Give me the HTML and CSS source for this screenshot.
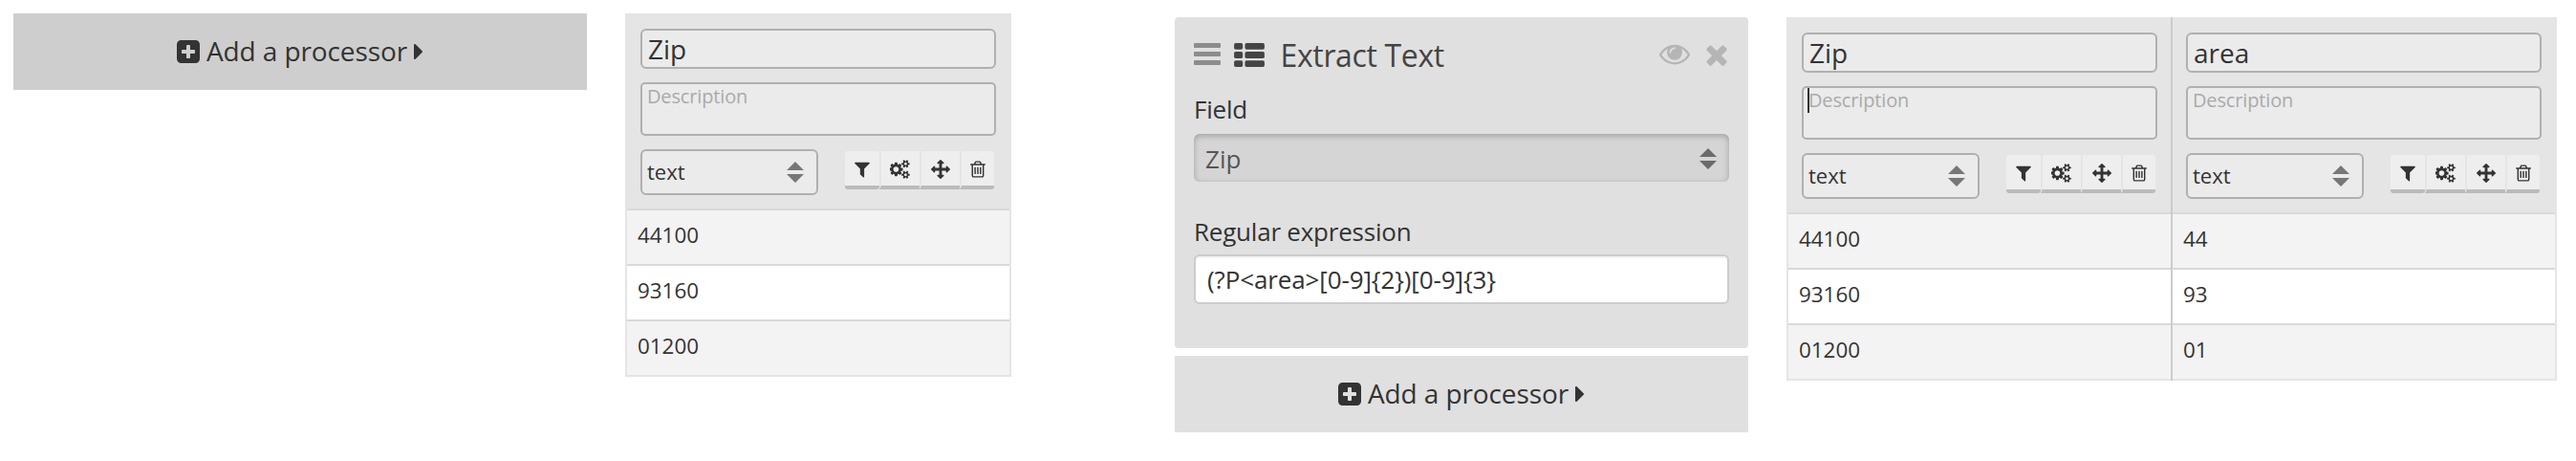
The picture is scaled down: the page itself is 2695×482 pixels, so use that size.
FILE: index.html
```html
<!DOCTYPE html>
<html lang="en">
<head>
<meta charset="utf-8">
<title>Processors</title>
<link rel="stylesheet" href="styles.css">
</head>
<body>
<svg class="defs" aria-hidden="true">
  <symbol id="plus-square" viewBox="128 128 1536 1536"><path d="M1344 960v-128q0-26-19-45t-45-19h-256v-256q0-26-19-45t-45-19h-128q-26 0-45 19t-19 45v256h-256q-26 0-45 19t-19 45v128q0 26 19 45t45 19h256v256q0 26 19 45t45 19h128q26 0 45-19t19-45v-256h256q26 0 45-19t19-45zM1664 416v960q0 119-84.500 203.500t-203.500 84.500h-960q-119 0-203.500-84.500t-84.500-203.500v-960q0-119 84.500-203.500t203.500-84.500h960q119 0 203.500 84.500t84.500 203.500z"/></symbol>
  <symbol id="caret" viewBox="576 384 576 1024"><path d="M1152 896q0 26-19 45l-448 448q-19 19-45 19t-45-19-19-45v-896q0-26 19-45t45-19 45 19l448 448q19 19 19 45z"/></symbol>
  <symbol id="filter" viewBox="0 0 1792 1792"><path d="M1595 295q17 41-14 70l-493 493v742q0 42-39 59-13 5-25 5-27 0-45-19l-256-256q-19-19-19-45v-486l-493-493q-31-29-14-70 17-39 59-39h1280q42 0 59 39z"/></symbol>
  <symbol id="cogs" viewBox="0 0 1920 1792"><path d="M832 896q0-106-75-181t-181-75-181 75-75 181 75 181 181 75 181-75 75-181zm768 512q0-52-38-90t-90-38-90 38-38 90q0 53 37.500 90.500t90.500 37.500 90.500-37.500 37.500-90.500zm0-1024q0-52-38-90t-90-38-90 38-38 90q0 53 37.500 90.500t90.500 37.500 90.500-37.500 37.500-90.500zm-384 421v185q0 10-7 19.500t-16 10.500l-155 24q-11 35-32 76 34 48 90 115 7 11 7 20 0 12-7 19-23 30-82.500 89.500t-78.500 59.500q-11 0-21-7l-115-90q-37 19-77 31-11 108-23 155-7 24-30 24h-186q-11 0-20-7.500t-10-17.500l-23-153q-34-10-75-31l-118 89q-7 7-20 7-11 0-21-8-144-133-144-160 0-9 7-19 10-14 41-53t47-61q-23-44-35-82l-152-24q-10-1-17-9.500t-7-19.500v-185q0-10 7-19.500t16-10.500l155-24q11-35 32-76-34-48-90-115-7-11-7-20 0-12 7-20 22-30 82-89t79-59q11 0 21 7l115 90q34-18 77-32 11-108 23-154 7-24 30-24h186q11 0 20 7.500t10 17.500l23 153q34 10 75 31l118-89q8-7 20-7 11 0 21 8 144 133 144 160 0 8-7 19-12 16-42 54t-45 60q23 48 34 82l152 23q10 2 17 10.500t7 19.500zm640 533v140q0 16-149 31-12 27-30 52 51 113 51 138 0 4-4 7-122 71-124 71-8 0-46-47t-52-68q-20 2-30 2t-30-2q-14 21-52 68t-46 47q-2 0-124-71-4-3-4-7 0-25 51-138-18-25-30-52-149-15-149-31v-140q0-16 149-31 13-29 30-52-51-113-51-138 0-4 4-7 4-2 35-20t59-34 30-16q8 0 46 46.500t52 67.500q20-2 30-2t30 2q51-71 92-112l6-2q4 0 124 70 4 3 4 7 0 25-51 138 17 23 30 52 149 15 149 31zm0-1024v140q0 16-149 31-12 27-30 52 51 113 51 138 0 4-4 7-122 71-124 71-8 0-46-47t-52-68q-20 2-30 2t-30-2q-14 21-52 68t-46 47q-2 0-124-71-4-3-4-7 0-25 51-138-18-25-30-52-149-15-149-31v-140q0-16 149-31 13-29 30-52-51-113-51-138 0-4 4-7 4-2 35-20t59-34 30-16q8 0 46 46.500t52 67.500q20-2 30-2t30 2q51-71 92-112l6-2q4 0 124 70 4 3 4 7 0 25-51 138 17 23 30 52 149 15 149 31z"/></symbol>
  <symbol id="move" viewBox="0 0 1792 1792"><path d="M1792 896q0 26-19 45l-256 256q-19 19-45 19t-45-19-19-45v-128h-384v384h128q26 0 45 19t19 45-19 45l-256 256q-19 19-45 19t-45-19l-256-256q-19-19-19-45t19-45 45-19h128v-384h-384v128q0 26-19 45t-45 19-45-19l-256-256q-19-19-19-45t19-45l256-256q19-19 45-19t45 19 19 45v128h384v-384h-128q-26 0-45-19t-19-45 19-45l256-256q19-19 45-19t45 19l256 256q19 19 19 45t-19 45-45 19h-128v384h384v-128q0-26 19-45t45-19 45 19l256 256q19 19 19 45z"/></symbol>
  <symbol id="trash" viewBox="0 0 1792 1792"><path d="M704 736v576q0 14-9 23t-23 9h-64q-14 0-23-9t-9-23v-576q0-14 9-23t23-9h64q14 0 23 9t9 23zm256 0v576q0 14-9 23t-23 9h-64q-14 0-23-9t-9-23v-576q0-14 9-23t23-9h64q14 0 23 9t9 23zm256 0v576q0 14-9 23t-23 9h-64q-14 0-23-9t-9-23v-576q0-14 9-23t23-9h64q14 0 23 9t9 23zm128 724v-948h-896v948q0 22 7 40.500t14.500 27 10.500 8.500h832q3 0 10.500-8.500t14.500-27 7-40.500zm-672-1076h448l-48-117q-7-9-17-11h-317q-10 2-17 11zm928 32v64q0 14-9 23t-23 9h-96v948q0 83-47 143.500t-113 60.500h-832q-66 0-113-58.500t-47-141.500v-952h-96q-14 0-23-9t-9-23v-64q0-14 9-23t23-9h309l70-167q15-37 54-63t79-26h320q40 0 79 26t54 63l70 167h309q14 0 23 9t9 23z"/></symbol>
  <symbol id="eye" viewBox="0 0 1792 1792"><path d="M1664 960q-152-236-381-353 61 104 61 225 0 185-131.500 316.500t-316.500 131.500-316.500-131.500-131.500-316.500q0-121 61-225-229 117-381 353 133 205 333.500 326.500t434.500 121.500 434.500-121.500 333.500-326.500zm-720-384q0-20-14-34t-34-14q-125 0-214.500 89.500t-89.500 214.500q0 20 14 34t34 14 34-14 14-34q0-86 61-147t147-61q20 0 34-14t14-34zm848 384q0 34-20 69-140 230-376.500 368.500t-499.500 138.500-499.500-139-376.500-368q-20-35-20-69t20-69q140-229 376.500-368t499.500-139 499.500 139 376.500 368q20 35 20 69z"/></symbol>
  <symbol id="times" viewBox="0 0 1792 1792"><path d="M1490 1322q0 40-28 68l-136 136q-28 28-68 28t-68-28l-294-294-294 294q-28 28-68 28t-68-28l-136-136q-28-28-28-68t28-68l294-294-294-294q-28-28-28-68t28-68l136-136q28-28 68-28t68 28l294 294 294-294q28-28 68-28t68 28l136 136q28 28 28 68t-28 68l-294 294 294 294q28 28 28 68z"/></symbol>
  <symbol id="sort" viewBox="0 0 18 22"><path d="M0 9L9 0L18 9zM0 13H18L9 22z"/></symbol>
</svg>

<main class="page">
  <section class="steps steps-empty">
    <div class="add add-hover">
      <svg class="add-plus"><use href="#plus-square"/></svg>
      <span class="add-label">Add a processor</span>
      <svg class="add-caret"><use href="#caret"/></svg>
    </div>
  </section>

  <section class="grid grid-before">
    <div class="column">
      <div class="head">
        <div class="name">Zip</div>
        <div class="desc">Description</div>
        <div class="controls">
          <div class="type"><span>text</span><svg class="sort"><use href="#sort"/></svg></div>
          <div class="tools">
            <span class="tool"><svg><use href="#filter"/></svg></span>
            <span class="tool tool-mid"><svg class="cogs"><use href="#cogs"/></svg></span>
            <span class="tool tool-mid"><svg><use href="#move"/></svg></span>
            <span class="tool tool-last"><svg><use href="#trash"/></svg></span>
          </div>
        </div>
      </div>
      <div class="cell odd">44100</div>
      <div class="cell">93160</div>
      <div class="cell odd">01200</div>
    </div>
  </section>

  <section class="steps steps-filled">
    <div class="panel">
      <div class="panel-head">
        <svg class="bars" viewBox="0 0 28 23"><rect width="28" height="5" rx="1"/><rect y="9" width="28" height="5" rx="1"/><rect y="18" width="28" height="5" rx="1"/></svg>
        <svg class="list" viewBox="0 0 1792 1408"><rect width="512" height="384" rx="96"/><rect x="640" width="1152" height="384" rx="96"/><rect y="512" width="512" height="384" rx="96"/><rect x="640" y="512" width="1152" height="384" rx="96"/><rect y="1024" width="512" height="384" rx="96"/><rect x="640" y="1024" width="1152" height="384" rx="96"/></svg>
        <span class="panel-title">Extract Text</span>
        <svg class="action"><use href="#eye"/></svg>
        <svg class="action close"><use href="#times"/></svg>
      </div>
      <div class="label">Field</div>
      <div class="select"><span>Zip</span><svg class="sort"><use href="#sort"/></svg></div>
      <div class="label label-regex">Regular expression</div>
      <div class="input">(?P&lt;area&gt;[0-9]{2})[0-9]{3}</div>
    </div>
    <div class="add">
      <svg class="add-plus"><use href="#plus-square"/></svg>
      <span class="add-label">Add a processor</span>
      <svg class="add-caret"><use href="#caret"/></svg>
    </div>
  </section>

  <section class="grid grid-after">
    <div class="column">
      <div class="head">
        <div class="name">Zip</div>
        <div class="desc focused">Description</div>
        <div class="controls">
          <div class="type"><span>text</span><svg class="sort"><use href="#sort"/></svg></div>
          <div class="tools">
            <span class="tool"><svg><use href="#filter"/></svg></span>
            <span class="tool tool-mid"><svg class="cogs"><use href="#cogs"/></svg></span>
            <span class="tool tool-mid"><svg><use href="#move"/></svg></span>
            <span class="tool tool-last"><svg><use href="#trash"/></svg></span>
          </div>
        </div>
      </div>
      <div class="cell odd">44100</div>
      <div class="cell">93160</div>
      <div class="cell odd">01200</div>
    </div>
    <div class="column">
      <div class="head">
        <div class="name">area</div>
        <div class="desc">Description</div>
        <div class="controls">
          <div class="type"><span>text</span><svg class="sort"><use href="#sort"/></svg></div>
          <div class="tools">
            <span class="tool"><svg><use href="#filter"/></svg></span>
            <span class="tool tool-mid"><svg class="cogs"><use href="#cogs"/></svg></span>
            <span class="tool tool-mid"><svg><use href="#move"/></svg></span>
            <span class="tool tool-last"><svg><use href="#trash"/></svg></span>
          </div>
        </div>
      </div>
      <div class="cell odd">44</div>
      <div class="cell">93</div>
      <div class="cell odd">01</div>
    </div>
  </section>
</main>
</body>
</html>
```
FILE: styles.css
```css
* { box-sizing: border-box; }

body {
  margin: 0;
  background: #fff;
  color: #333;
  font-family: "Open Sans", "Noto Sans", sans-serif;
}

svg { display: block; flex: none; fill: currentColor; }
.defs { display: none; }

.page {
  display: flex;
  align-items: flex-start;
  width: 2695px;
  height: 482px;
  padding: 14px 0 0 14px;
  overflow: hidden;
}

/* Processor list */
.steps { flex: none; width: 600px; }
.steps-filled { margin: 4px 0 0 171px; }

.add {
  display: flex;
  align-items: center;
  justify-content: center;
  height: 80px;
  background: #e0e0e0;
  font-size: 28px;
}
.add-hover { background: #cecece; }
.add-plus { width: 24px; height: 24px; margin-right: 7px; }
.add-label { line-height: 38px; padding-bottom: 2px; white-space: nowrap; letter-spacing: -.1px; }
.add-caret { width: 9px; height: 16px; margin: 0 1px 0 7px; }

.panel {
  height: 346px;
  margin-bottom: 8px;
  padding: 20px;
  border-radius: 4px;
  background: #e0e0e0;
}
.panel-head { display: flex; align-items: center; height: 40px; color: #444; }
.bars { width: 28px; height: 23px; margin-bottom: 3px; color: #8c8c8c; }
.list { width: 32px; height: 25px; margin: 0 17px 1px 13.500px; }
.panel-title { flex: 1; font-size: 32px; line-height: 40px; letter-spacing: -.35px; }
.action { width: 32px; height: 32px; margin-bottom: 4px; color: #b5b5b5; }
.close { margin: 0 -3px 3px 12px; }

.label { margin-top: 16px; font-size: 26px; line-height: 40px; letter-spacing: -.22px; }
.label-regex { margin-top: 32px; }

.select {
  display: flex;
  align-items: center;
  justify-content: space-between;
  height: 50px;
  margin-top: 6px;
  padding: 1px 13px 0 12px;
  border-radius: 6px;
  background: #d5d5d5;
  box-shadow: inset 0 2px 6px rgba(0, 0, 0, .25);
  color: #555;
  font-size: 26px;
  line-height: 50px;
}
.select .sort { color: #6b6b6b; }
.sort { width: 18px; height: 22px; color: #777; }

.input {
  height: 52px;
  margin-top: 4px;
  padding-left: 12px;
  border: 2px solid #ccc;
  border-radius: 6px;
  background: #fff;
  box-shadow: inset 0 2px 2px rgba(0, 0, 0, .06);
  font-size: 26px;
  line-height: 48px;
  letter-spacing: -.12px;
}

/* Data preview */
.grid {
  display: flex;
  flex: none;
  border: 2px solid #e5e5e5;
}
.grid-before { margin-left: 40px; }
.grid-after { margin: 4px 0 0 40px; }

.column { position: relative; width: 400px; }
.column + .column { width: 402px; border-left: 2px solid #ccc; margin: -2px 0; padding: 2px 0; }

.head { height: 202px; padding: 14px; background: #e5e5e5; }

.name, .desc, .type {
  border: 2px solid #b0b0b0;
  border-radius: 6px;
  background: #ebebeb;
}
.name { height: 42px; padding-left: 6px; font-size: 28px; line-height: 38px; }
.desc {
  position: relative;
  height: 56px;
  margin: 14px 0;
  padding-left: 5px;
  border-radius: 5px;
  color: #aaa;
  font-size: 20px;
  line-height: 26px;
  letter-spacing: -.15px;
}
.focused::before {
  content: "";
  position: absolute;
  left: 4px;
  top: 0;
  width: 2px;
  height: 26px;
  background: #333;
}
.controls { display: flex; justify-content: space-between; align-items: flex-start; }
.type {
  display: flex;
  align-items: center;
  justify-content: space-between;
  width: 186px;
  height: 48px;
  padding: 0 13px 0 5px;
  font-size: 22px;
  line-height: 42px;
}
.type span { padding-bottom: 2px; }

.tools { display: flex; padding: 2px 2px 0 0; }
.tool {
  display: flex;
  align-items: center;
  justify-content: center;
  width: 36px;
  height: 40px;
  border-bottom: 4px solid #bbb;
  border-radius: 3px;
  background: #eee;
}
.tool svg { width: 20px; height: 20px; margin-bottom: -1px; }
.tool svg.cogs { width: 21.430px; }
.tool-mid, .tool-last { border-left: 2px solid #e5e5e5; border-radius: 0; }
.tool-mid { width: 42px; }
.tool-last { border-radius: 0 3px 3px 0; }

.cell {
  height: 58px;
  padding-left: 11px;
  border-top: 2px solid #d9d9d9;
  font-size: 22.400px;
  line-height: 51px;
}
.odd { background: #f3f3f3; }
```
